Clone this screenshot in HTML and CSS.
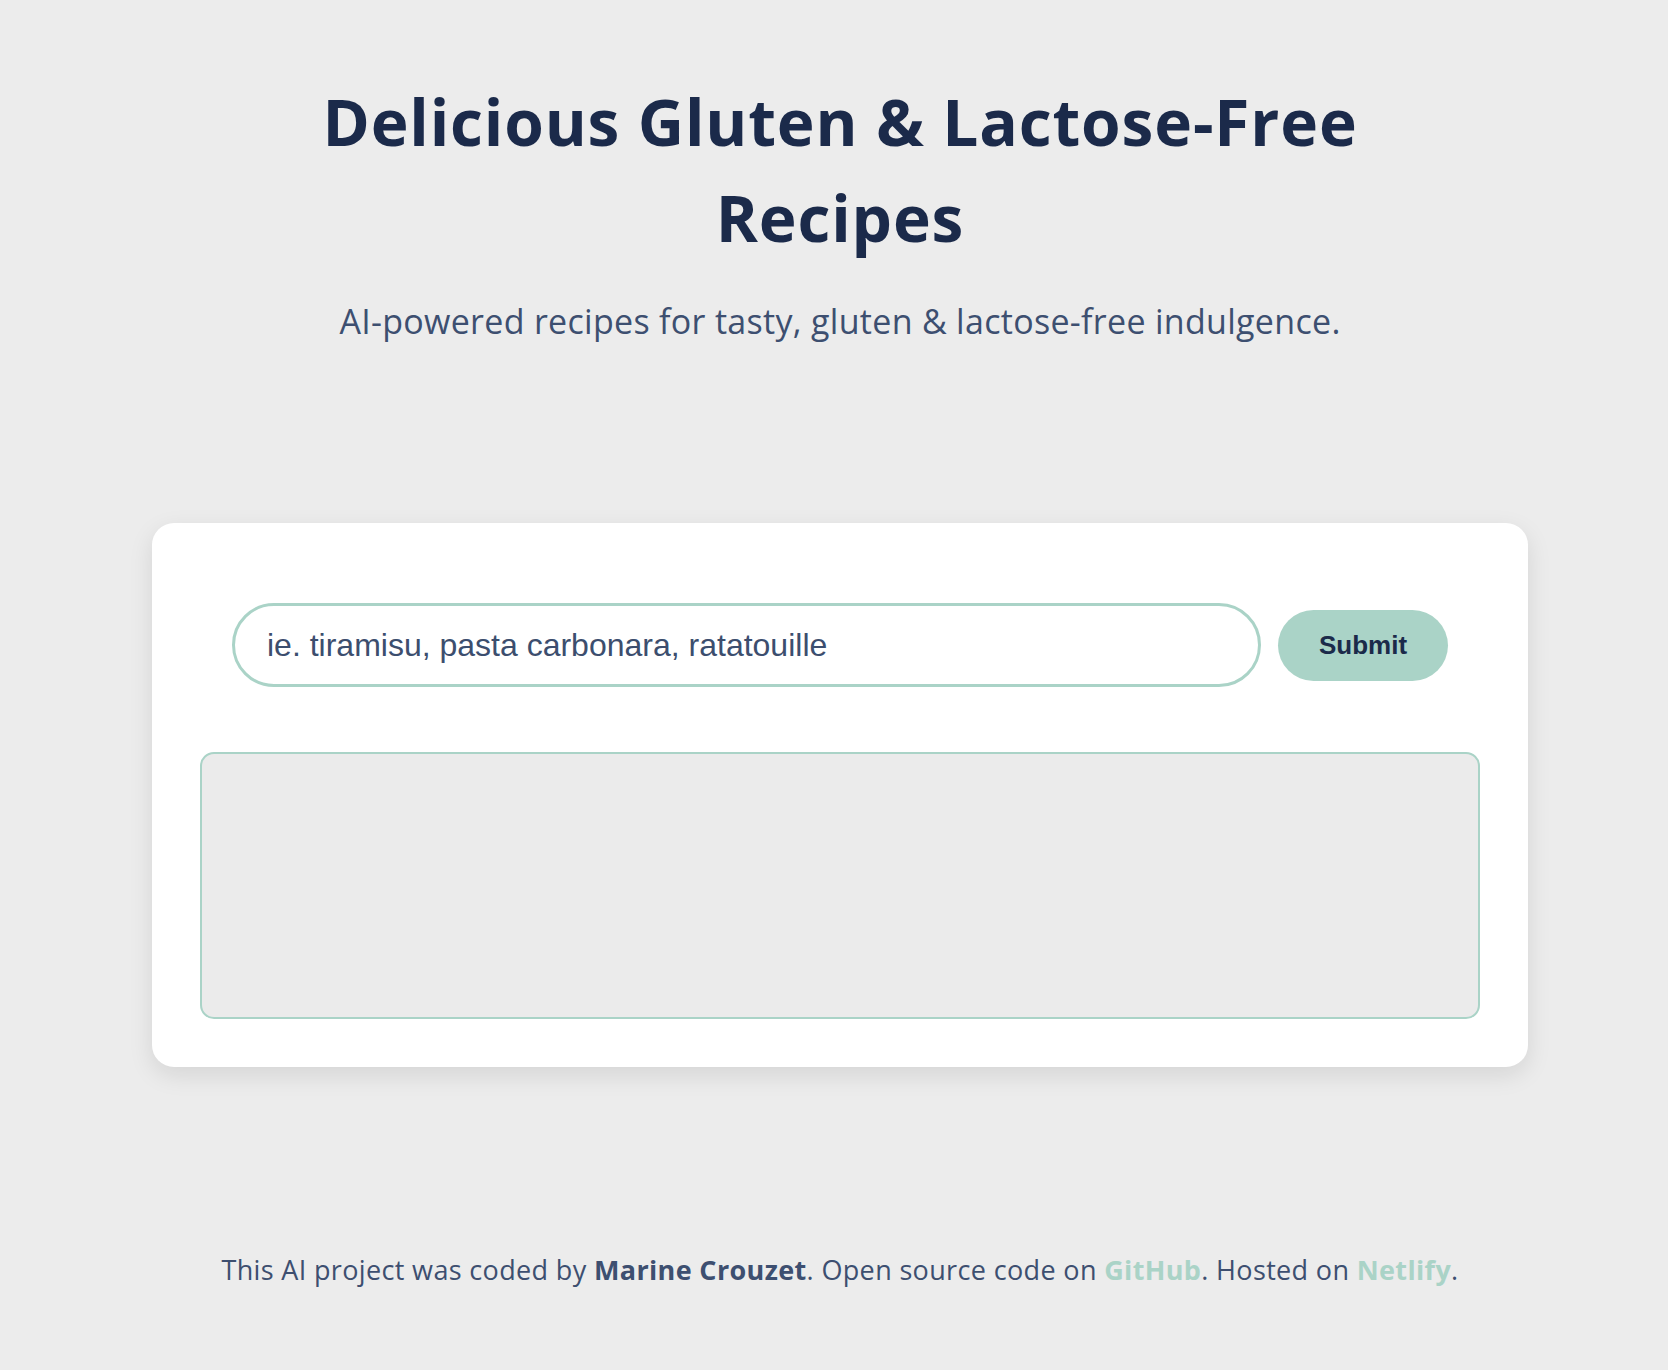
FILE: index.html
```html
<!DOCTYPE html>
<html lang="en">
<head>
<meta charset="utf-8">
<title>Delicious Gluten & Lactose-Free Recipes</title>
<link rel="stylesheet" href="styles.css">
</head>
<body>
<div class="page">
  <header class="header">
    <h1 class="title">Delicious Gluten &amp; Lactose-Free Recipes</h1>
    <p class="subtitle">AI-powered recipes for tasty, gluten &amp; lactose-free indulgence.</p>
  </header>
  <main class="card">
    <form class="search">
      <input class="search-input" type="text" placeholder="ie. tiramisu, pasta carbonara, ratatouille">
      <button class="search-button" type="button">Submit</button>
    </form>
    <div class="result"></div>
  </main>
  <footer class="footer">
    This AI project was coded by <strong>Marine Crouzet</strong>. Open source code on <a href="#">GitHub</a>. Hosted on <a href="#">Netlify</a>.
  </footer>
</div>
</body>
</html>
```
FILE: styles.css
```css
html, body {
  margin: 0;
  padding: 0;
}
body {
  background: #ececec;
  font-family: "Open Sans", "DejaVu Sans", sans-serif;
  color: #3d4f70;
  padding-left: 12px;
}
.page {
  width: 1376px;
  margin: 0 auto;
}
.header {
  text-align: center;
  padding-top: 74px;
}
.title {
  margin: 0 auto;
  max-width: 1100px;
  font-size: 64px;
  font-weight: 700;
  letter-spacing: 0.85px;
  line-height: 96px;
  color: #1b2a4a;
}
.subtitle {
  margin: 32px 0 0;
  font-size: 34px;
  letter-spacing: 0.3px;
  line-height: 46px;
  color: #3d4f70;
}
.card {
  margin-top: 179px;
  background: #ffffff;
  border-radius: 22px;
  padding: 48px;
  box-shadow: 0 8px 24px rgba(0, 0, 0, 0.1);
}
.search {
  display: flex;
  align-items: center;
  gap: 17px;
  padding: 32px 32px 0;
  margin: 0;
}
.search-input {
  flex: 1;
  height: 84px;
  box-sizing: border-box;
  border: 3px solid #aad3c7;
  border-radius: 42px;
  padding: 0 32px;
  font-family: "Liberation Sans", Arial, sans-serif;
  font-size: 32px;
  color: #3c4e6e;
  background: #fff;
  outline: none;
}
.search-input::placeholder {
  color: #3c4e6e;
  opacity: 1;
}
.search-button {
  width: 170px;
  height: 71px;
  border: none;
  border-radius: 36px;
  background: #aad3c7;
  color: #1b2a4a;
  font-family: "Liberation Sans", Arial, sans-serif;
  font-weight: 700;
  font-size: 26px;
  cursor: pointer;
}
.result {
  margin-top: 65px;
  height: 267px;
  box-sizing: border-box;
  border: 2px solid #aad3c7;
  border-radius: 14px;
  background: #ebebeb;
}
.footer {
  text-align: center;
  margin-top: 183px;
  font-size: 27px;
  letter-spacing: 0.35px;
  line-height: 40px;
  color: #3d4f70;
}
.footer strong {
  font-weight: 700;
}
.footer a {
  color: #aad3c7;
  font-weight: 700;
  text-decoration: none;
}
```
